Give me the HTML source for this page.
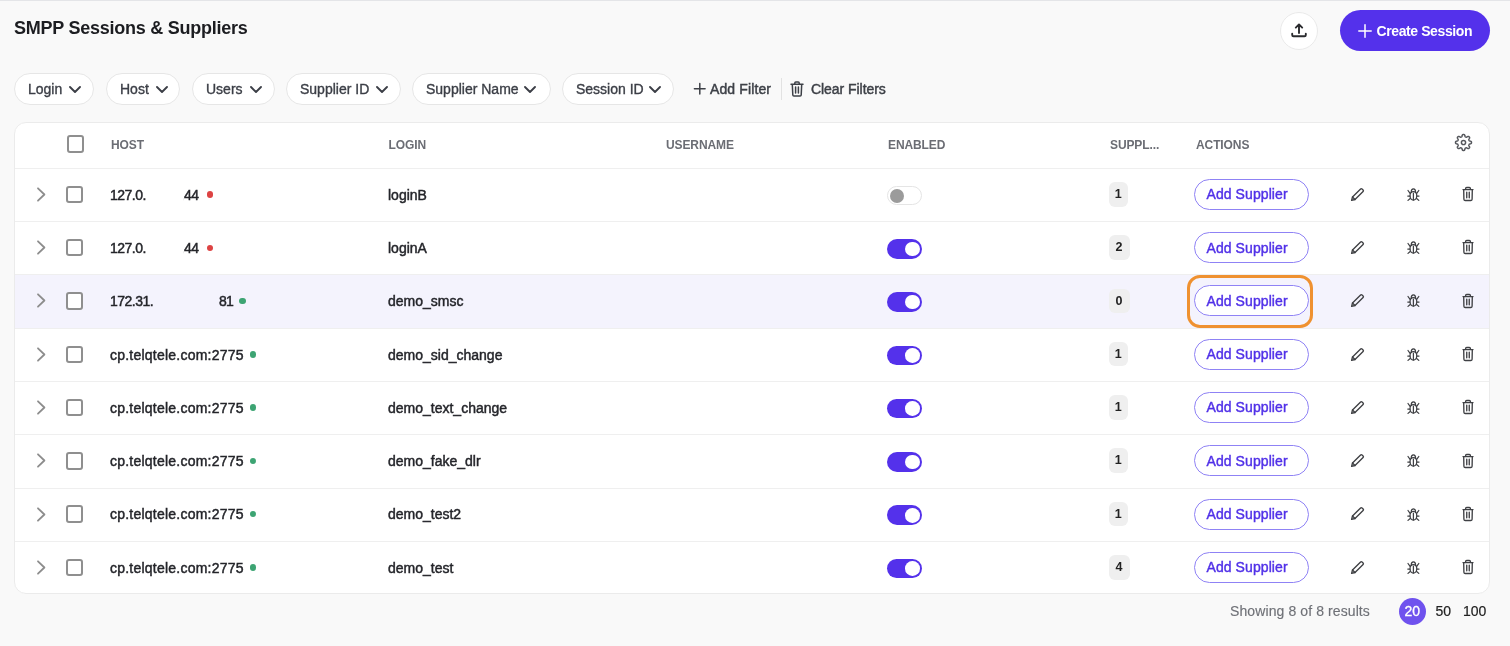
<!DOCTYPE html>
<html><head><meta charset="utf-8">
<style>
*{box-sizing:border-box;margin:0;padding:0}
html,body{width:1510px;height:646px;overflow:hidden;background:#f9f9f9;font-family:"Liberation Sans",sans-serif;color:#222327}
.a{position:absolute}
.topline{left:0;top:0;width:1510px;height:1px;background:#e4e5e8}
.title{left:14px;top:18px;font-size:18px;line-height:20px;font-weight:bold;letter-spacing:-0.25px;color:#1c1d21;white-space:nowrap}
.upl{left:1280px;top:11.5px;width:38px;height:38px;border-radius:50%;background:#fff;border:1px solid #e9e9e9}
.create{left:1340px;top:10px;width:150px;height:41px;border-radius:21px;background:#5431eb;color:#fff}
.create .t{position:absolute;left:36.5px;top:0.5px;line-height:41px;font-size:14px;font-weight:bold;letter-spacing:-0.4px;white-space:nowrap}
.chip{top:73px;height:32px;border-radius:16px;background:#fff;border:1px solid #e6e6e6}
.chip .t{position:absolute;left:13px;top:0;line-height:30px;font-size:14px;color:#3b3e46;white-space:nowrap;-webkit-text-stroke:0.35px #3b3e46}
.chip svg{position:absolute;top:11.8px;margin-left:-0.5px}
.lnk{top:74px;line-height:30px;font-size:14px;color:#3d4047;white-space:nowrap;letter-spacing:0.12px;-webkit-text-stroke:0.45px #3d4047}
.card{left:14px;top:121.5px;width:1476px;height:472.5px;border-radius:12px;background:#fff;border:1px solid #ebebeb;overflow:hidden}
.hd{top:122px;line-height:46px;font-size:12px;font-weight:bold;color:#6b6d74;white-space:nowrap;letter-spacing:-0.1px}
.hline{left:15px;width:1474px;height:1px;background:#efefef}
.cb{width:17.5px;height:17.5px;border:2px solid #8f8f8f;border-radius:3px;background:#fff}
.rt{font-size:14px;line-height:20px;color:#24252a;white-space:nowrap;-webkit-text-stroke:0.45px #24252a}
.dot{width:6.5px;height:6.5px;border-radius:50%}
.red{background:#dd4343}
.grn{background:#3da473}
.tg{width:35px;height:19.5px;border-radius:10px;background:#5431eb}
.tg i{position:absolute;top:2.5px;left:18px;width:14.6px;height:14.6px;border-radius:50%;background:#fff}
.tg.off{background:#fff;border:1px solid #e5e5e5}
.tg.off i{background:#9b9b9b;left:1.8px;top:2.2px;width:14px;height:14px}
.bdg{height:24.5px;border-radius:6px;background:#efefef;font-size:12.5px;font-weight:bold;line-height:24.5px;text-align:center;color:#222}
.add{left:1194px;width:114.5px;height:31px;border-radius:16px;border:1px solid #8f82f5;background:#fff;color:#5030e8;font-size:14px;line-height:29px;white-space:nowrap;-webkit-text-stroke:0.4px #5030e8}
.add span{position:absolute;left:11.5px;top:0.5px;letter-spacing:0.08px}
.ic{position:absolute}
.foot{top:601px;line-height:20px;font-size:14px;white-space:nowrap}
</style></head>
<body>
<div id="wrap" style="position:absolute;left:0;top:0;width:1510px;height:646px;will-change:transform">
<div class="a topline"></div>
<div class="a title">SMPP Sessions &amp; Suppliers</div>

<div class="a upl">
  <svg class="ic" style="left:9px;top:9px" width="20" height="20" viewBox="0 0 20 20" fill="none" stroke="#2a2b2e" stroke-width="1.9" stroke-linecap="round" stroke-linejoin="round">
    <path d="M9 2.4V11M5.8 5.6 9 2.4 12.2 5.6"/>
    <path d="M2.2 11.7V12.9Q2.2 14.2 3.5 14.2H14.5Q15.8 14.2 15.8 12.9V11.7"/>
  </svg>
</div>
<div class="a create">
  <svg class="ic" style="left:17.5px;top:13.5px" width="14" height="14" viewBox="0 0 14 14" stroke="#fff" stroke-width="1.5" stroke-linecap="round"><path d="M7 0.8V13.2M0.8 7H13.2"/></svg>
  <span class="t">Create Session</span>
</div>

<!-- filter chips -->
<div class="a chip" style="left:14px;width:80px"><span class="t">Login</span><svg style="left:54px" width="12" height="7" viewBox="0 0 12 7" fill="none" stroke="#3b3e46" stroke-width="1.85" stroke-linecap="round" stroke-linejoin="round"><path d="M1 1 6 6 11 1"/></svg></div>
<div class="a chip" style="left:106px;width:74px"><span class="t">Host</span><svg style="left:49px" width="12" height="7" viewBox="0 0 12 7" fill="none" stroke="#3b3e46" stroke-width="1.85" stroke-linecap="round" stroke-linejoin="round"><path d="M1 1 6 6 11 1"/></svg></div>
<div class="a chip" style="left:192px;width:83px"><span class="t">Users</span><svg style="left:57px" width="12" height="7" viewBox="0 0 12 7" fill="none" stroke="#3b3e46" stroke-width="1.85" stroke-linecap="round" stroke-linejoin="round"><path d="M1 1 6 6 11 1"/></svg></div>
<div class="a chip" style="left:286px;width:115px"><span class="t">Supplier ID</span><svg style="left:89px" width="12" height="7" viewBox="0 0 12 7" fill="none" stroke="#3b3e46" stroke-width="1.85" stroke-linecap="round" stroke-linejoin="round"><path d="M1 1 6 6 11 1"/></svg></div>
<div class="a chip" style="left:412px;width:139px"><span class="t">Supplier Name</span><svg style="left:111.5px" width="12" height="7" viewBox="0 0 12 7" fill="none" stroke="#3b3e46" stroke-width="1.85" stroke-linecap="round" stroke-linejoin="round"><path d="M1 1 6 6 11 1"/></svg></div>
<div class="a chip" style="left:562px;width:112px"><span class="t">Session ID</span><svg style="left:86px" width="12" height="7" viewBox="0 0 12 7" fill="none" stroke="#3b3e46" stroke-width="1.85" stroke-linecap="round" stroke-linejoin="round"><path d="M1 1 6 6 11 1"/></svg></div>

<svg class="ic" style="left:693px;top:82px" width="13" height="13" viewBox="0 0 13 13" stroke="#3d4047" stroke-width="1.5" stroke-linecap="round"><path d="M6.8 1.4V12.1M1.4 6.8H12.1"/></svg>
<div class="a lnk" style="left:710px">Add Filter</div>
<div class="a" style="left:780.5px;top:78px;width:1px;height:21.5px;background:#e2e2e2"></div>
<svg class="ic" style="left:790px;top:81px" width="14" height="16" viewBox="0 0 14 16" fill="none" stroke="#3d4047" stroke-width="1.5" stroke-linecap="round" stroke-linejoin="round">
  <path d="M1 3.2H13M4.8 3.2V2Q4.8 1 5.8 1H8.2Q9.2 1 9.2 2V3.2M2.3 3.2 2.8 14Q2.9 15 3.9 15H10.1Q11.1 15 11.2 14L11.7 3.2M5.6 6V12M8.4 6V12"/>
</svg>
<div class="a lnk" style="left:811px;letter-spacing:-0.05px">Clear Filters</div>

<!-- table card -->
<div class="a card"></div>
<div class="a cb" style="left:66.5px;top:135px"></div>
<div class="a hd" style="left:111px">HOST</div>
<div class="a hd" style="left:388.5px">LOGIN</div>
<div class="a hd" style="left:666px">USERNAME</div>
<div class="a hd" style="left:888px">ENABLED</div>
<div class="a hd" style="left:1110px">SUPPL...</div>
<div class="a hd" style="left:1196px">ACTIONS</div>
<svg class="ic" style="left:1454px;top:133.3px" width="19" height="19" viewBox="0 0 19 19" fill="none" stroke="#55575c" stroke-width="1.45" stroke-linejoin="round"><path d="M17.50 9.50 17.50 9.66 17.48 9.81 17.46 9.97 17.42 10.12 17.36 10.27 17.27 10.42 17.12 10.55 16.92 10.67 16.64 10.78 16.32 10.86 15.99 10.92 15.71 10.99 15.50 11.07 15.35 11.15 15.24 11.24 15.16 11.34 15.10 11.44 15.05 11.55 15.00 11.65 14.95 11.76 14.91 11.87 14.87 11.97 14.83 12.09 14.81 12.20 14.79 12.33 14.80 12.47 14.85 12.64 14.95 12.84 15.10 13.08 15.28 13.36 15.45 13.65 15.58 13.91 15.64 14.15 15.64 14.34 15.60 14.51 15.54 14.66 15.46 14.80 15.37 14.92 15.26 15.04 15.16 15.16 15.04 15.26 14.92 15.37 14.80 15.46 14.66 15.54 14.51 15.60 14.34 15.64 14.15 15.64 13.91 15.58 13.65 15.45 13.36 15.28 13.08 15.10 12.84 14.95 12.64 14.85 12.47 14.80 12.33 14.79 12.20 14.81 12.09 14.83 11.97 14.87 11.87 14.91 11.76 14.95 11.65 15.00 11.55 15.05 11.44 15.10 11.34 15.16 11.24 15.24 11.15 15.35 11.07 15.50 10.99 15.71 10.92 15.99 10.86 16.32 10.78 16.64 10.67 16.92 10.55 17.12 10.42 17.27 10.27 17.36 10.12 17.42 9.97 17.46 9.81 17.48 9.66 17.50 9.50 17.50 9.34 17.50 9.19 17.48 9.03 17.46 8.88 17.42 8.73 17.36 8.58 17.27 8.45 17.12 8.33 16.92 8.22 16.64 8.14 16.32 8.08 15.99 8.01 15.71 7.93 15.50 7.85 15.35 7.76 15.24 7.66 15.16 7.56 15.10 7.45 15.05 7.35 15.00 7.24 14.95 7.13 14.91 7.03 14.87 6.91 14.83 6.80 14.81 6.67 14.79 6.53 14.80 6.36 14.85 6.16 14.95 5.92 15.10 5.64 15.28 5.35 15.45 5.09 15.58 4.85 15.64 4.66 15.64 4.49 15.60 4.34 15.54 4.20 15.46 4.08 15.37 3.96 15.26 3.84 15.16 3.74 15.04 3.63 14.92 3.54 14.80 3.46 14.66 3.40 14.51 3.36 14.34 3.36 14.15 3.42 13.91 3.55 13.65 3.72 13.36 3.90 13.08 4.05 12.84 4.15 12.64 4.20 12.47 4.21 12.33 4.19 12.20 4.17 12.09 4.13 11.97 4.09 11.87 4.05 11.76 4.00 11.65 3.95 11.55 3.90 11.44 3.84 11.34 3.76 11.24 3.65 11.15 3.50 11.07 3.29 10.99 3.01 10.92 2.68 10.86 2.36 10.78 2.08 10.67 1.88 10.55 1.73 10.42 1.64 10.27 1.58 10.12 1.54 9.97 1.52 9.81 1.50 9.66 1.50 9.50 1.50 9.34 1.52 9.19 1.54 9.03 1.58 8.88 1.64 8.73 1.73 8.58 1.88 8.45 2.08 8.33 2.36 8.22 2.68 8.14 3.01 8.08 3.29 8.01 3.50 7.93 3.65 7.85 3.76 7.76 3.84 7.66 3.90 7.56 3.95 7.45 4.00 7.35 4.05 7.24 4.09 7.13 4.13 7.03 4.17 6.91 4.19 6.80 4.21 6.67 4.20 6.53 4.15 6.36 4.05 6.16 3.90 5.92 3.72 5.64 3.55 5.35 3.42 5.09 3.36 4.85 3.36 4.66 3.40 4.49 3.46 4.34 3.54 4.20 3.63 4.08 3.74 3.96 3.84 3.84 3.96 3.74 4.08 3.63 4.20 3.54 4.34 3.46 4.49 3.40 4.66 3.36 4.85 3.36 5.09 3.42 5.35 3.55 5.64 3.72 5.92 3.90 6.16 4.05 6.36 4.15 6.53 4.20 6.67 4.21 6.80 4.19 6.91 4.17 7.03 4.13 7.13 4.09 7.24 4.05 7.35 4.00 7.45 3.95 7.56 3.90 7.66 3.84 7.76 3.76 7.85 3.65 7.93 3.50 8.01 3.29 8.08 3.01 8.14 2.68 8.22 2.36 8.33 2.08 8.45 1.88 8.58 1.73 8.73 1.64 8.88 1.58 9.03 1.54 9.19 1.52 9.34 1.50 9.50 1.50 9.66 1.50 9.81 1.52 9.97 1.54 10.12 1.58 10.27 1.64 10.42 1.73 10.55 1.88 10.67 2.08 10.78 2.36 10.86 2.68 10.92 3.01 10.99 3.29 11.07 3.50 11.15 3.65 11.24 3.76 11.34 3.84 11.44 3.90 11.55 3.95 11.65 4.00 11.76 4.05 11.87 4.09 11.97 4.13 12.09 4.17 12.20 4.19 12.33 4.21 12.47 4.20 12.64 4.15 12.84 4.05 13.08 3.90 13.36 3.72 13.65 3.55 13.91 3.42 14.15 3.36 14.34 3.36 14.51 3.40 14.66 3.46 14.80 3.54 14.92 3.63 15.04 3.74 15.16 3.84 15.26 3.96 15.37 4.08 15.46 4.20 15.54 4.34 15.60 4.49 15.64 4.66 15.64 4.85 15.58 5.09 15.45 5.35 15.28 5.64 15.10 5.92 14.95 6.16 14.85 6.36 14.80 6.53 14.79 6.67 14.81 6.80 14.83 6.91 14.87 7.03 14.91 7.13 14.95 7.24 15.00 7.35 15.05 7.45 15.10 7.56 15.16 7.66 15.24 7.76 15.35 7.85 15.50 7.93 15.71 8.01 15.99 8.08 16.32 8.14 16.64 8.22 16.92 8.33 17.12 8.45 17.27 8.58 17.36 8.73 17.42 8.88 17.46 9.03 17.48 9.19 17.50 9.34Z"/><circle cx="9.5" cy="9.5" r="2.1"/></svg>

<div class="a hline" style="top:168px"></div>
<!--ROWS-->
<div class="a hline" style="top:221.09px"></div>
<svg class="ic" style="left:36px;top:186.9px" width="10" height="15" viewBox="0 0 10 15" fill="none" stroke="#8d8d8d" stroke-width="1.8" stroke-linecap="round" stroke-linejoin="round"><path d="M2 1.3 8.4 7.5 2 13.7"/></svg>
<div class="a cb" style="left:65.5px;top:185.65px"></div>
<div class="a rt" style="left:110px;top:184.75px;letter-spacing:-0.5px">127.0.</div>
<div class="a rt" style="left:180.3px;top:184.75px;letter-spacing:-0.3px">.44</div>
<div class="a" style="left:150px;top:184.75px;width:32.6px;height:20px;background:#fff"></div>
<div class="a dot red" style="left:206.8px;top:191.25px"></div>
<div class="a rt" style="left:388px;top:184.75px">loginB</div>
<div class="a tg off" style="left:887px;top:185.75px"><i></i></div>
<div class="a bdg" style="left:1108.6px;top:182px;width:19.5px">1</div>
<div class="a add" style="top:178.8px"><span>Add Supplier</span></div>
<svg class="ic" style="left:1350px;top:186.7px" width="15" height="15" viewBox="0 0 15 15" fill="none" stroke="#3f4044" stroke-width="1.35" stroke-linejoin="round" stroke-linecap="round"><path d="M10.6 1.9Q11.3 1.2 12 1.9L13.1 3Q13.8 3.7 13.1 4.4L5 12.5 1.6 13.4 2.5 10Z"/><path d="M2.5 10 5 12.5"/></svg>
<svg class="ic" style="left:1406px;top:186.9px" width="15" height="15" viewBox="0 0 15 15" fill="none" stroke="#3f4044" stroke-width="1.25" stroke-linecap="round" stroke-linejoin="round"><ellipse cx="7.4" cy="8.8" rx="3.4" ry="4.3"/><path d="M5.2 5.4Q5.2 1.9 7.4 1.9Q9.6 1.9 9.6 5.4M7.4 6.2V12.9M4.1 6.4 2 3.5M10.7 6.4 12.8 3.5M4 9H1.8M10.8 9H13M4.2 11.5 2 13.4M10.6 11.5 12.8 13.4"/></svg>
<svg class="ic" style="left:1461px;top:186.2px" width="14" height="16" viewBox="0 0 14 16" fill="none" stroke="#3f4044" stroke-width="1.35" stroke-linecap="round" stroke-linejoin="round"><path d="M2 3.6H12M4.6 3.6V2.6Q4.6 1.5 5.7 1.5H8.3Q9.4 1.5 9.4 2.6V3.6M2.7 3.6 2.9 13.2Q3 14.5 4.2 14.5H9.8Q11 14.5 11.1 13.2L11.3 3.6M5.75 6.2V11.7M8.25 6.2V11.7"/></svg>
<div class="a hline" style="top:274.38px"></div>
<svg class="ic" style="left:36px;top:240.19px" width="10" height="15" viewBox="0 0 10 15" fill="none" stroke="#8d8d8d" stroke-width="1.8" stroke-linecap="round" stroke-linejoin="round"><path d="M2 1.3 8.4 7.5 2 13.7"/></svg>
<div class="a cb" style="left:65.5px;top:238.94px"></div>
<div class="a rt" style="left:110px;top:238.04px;letter-spacing:-0.5px">127.0.</div>
<div class="a rt" style="left:180.3px;top:238.04px;letter-spacing:-0.3px">.44</div>
<div class="a" style="left:150px;top:238.04px;width:32.6px;height:20px;background:#fff"></div>
<div class="a dot red" style="left:206.8px;top:244.54px"></div>
<div class="a rt" style="left:388px;top:238.04px">loginA</div>
<div class="a tg" style="left:887px;top:239.04px"><i></i></div>
<div class="a bdg" style="left:1108.6px;top:235.29px;width:21px">2</div>
<div class="a add" style="top:232.09px"><span>Add Supplier</span></div>
<svg class="ic" style="left:1350px;top:239.99px" width="15" height="15" viewBox="0 0 15 15" fill="none" stroke="#3f4044" stroke-width="1.35" stroke-linejoin="round" stroke-linecap="round"><path d="M10.6 1.9Q11.3 1.2 12 1.9L13.1 3Q13.8 3.7 13.1 4.4L5 12.5 1.6 13.4 2.5 10Z"/><path d="M2.5 10 5 12.5"/></svg>
<svg class="ic" style="left:1406px;top:240.19px" width="15" height="15" viewBox="0 0 15 15" fill="none" stroke="#3f4044" stroke-width="1.25" stroke-linecap="round" stroke-linejoin="round"><ellipse cx="7.4" cy="8.8" rx="3.4" ry="4.3"/><path d="M5.2 5.4Q5.2 1.9 7.4 1.9Q9.6 1.9 9.6 5.4M7.4 6.2V12.9M4.1 6.4 2 3.5M10.7 6.4 12.8 3.5M4 9H1.8M10.8 9H13M4.2 11.5 2 13.4M10.6 11.5 12.8 13.4"/></svg>
<svg class="ic" style="left:1461px;top:239.49px" width="14" height="16" viewBox="0 0 14 16" fill="none" stroke="#3f4044" stroke-width="1.35" stroke-linecap="round" stroke-linejoin="round"><path d="M2 3.6H12M4.6 3.6V2.6Q4.6 1.5 5.7 1.5H8.3Q9.4 1.5 9.4 2.6V3.6M2.7 3.6 2.9 13.2Q3 14.5 4.2 14.5H9.8Q11 14.5 11.1 13.2L11.3 3.6M5.75 6.2V11.7M8.25 6.2V11.7"/></svg>
<div class="a" style="left:15px;top:275.38px;width:1474px;height:52.29px;background:#f4f3fd"></div>
<div class="a hline" style="top:327.67px"></div>
<svg class="ic" style="left:36px;top:293.48px" width="10" height="15" viewBox="0 0 10 15" fill="none" stroke="#8d8d8d" stroke-width="1.8" stroke-linecap="round" stroke-linejoin="round"><path d="M2 1.3 8.4 7.5 2 13.7"/></svg>
<div class="a cb" style="left:65.5px;top:292.23px"></div>
<div class="a rt" style="left:110px;top:291.33px;letter-spacing:-0.5px">172.31.</div>
<div class="a rt" style="left:219px;top:291.33px;letter-spacing:-0.9px">81</div>
<div class="a dot grn" style="left:239.3px;top:297.83px"></div>
<div class="a rt" style="left:388px;top:291.33px">demo_smsc</div>
<div class="a tg" style="left:887px;top:292.33px"><i></i></div>
<div class="a bdg" style="left:1108.6px;top:288.58px;width:21px">0</div>
<div class="a" style="left:1187px;top:274.78px;width:125.6px;height:53.6px;border:3px solid #ef9130;border-radius:13px"></div>
<div class="a add" style="top:285.38px"><span>Add Supplier</span></div>
<svg class="ic" style="left:1350px;top:293.28px" width="15" height="15" viewBox="0 0 15 15" fill="none" stroke="#3f4044" stroke-width="1.35" stroke-linejoin="round" stroke-linecap="round"><path d="M10.6 1.9Q11.3 1.2 12 1.9L13.1 3Q13.8 3.7 13.1 4.4L5 12.5 1.6 13.4 2.5 10Z"/><path d="M2.5 10 5 12.5"/></svg>
<svg class="ic" style="left:1406px;top:293.48px" width="15" height="15" viewBox="0 0 15 15" fill="none" stroke="#3f4044" stroke-width="1.25" stroke-linecap="round" stroke-linejoin="round"><ellipse cx="7.4" cy="8.8" rx="3.4" ry="4.3"/><path d="M5.2 5.4Q5.2 1.9 7.4 1.9Q9.6 1.9 9.6 5.4M7.4 6.2V12.9M4.1 6.4 2 3.5M10.7 6.4 12.8 3.5M4 9H1.8M10.8 9H13M4.2 11.5 2 13.4M10.6 11.5 12.8 13.4"/></svg>
<svg class="ic" style="left:1461px;top:292.78px" width="14" height="16" viewBox="0 0 14 16" fill="none" stroke="#3f4044" stroke-width="1.35" stroke-linecap="round" stroke-linejoin="round"><path d="M2 3.6H12M4.6 3.6V2.6Q4.6 1.5 5.7 1.5H8.3Q9.4 1.5 9.4 2.6V3.6M2.7 3.6 2.9 13.2Q3 14.5 4.2 14.5H9.8Q11 14.5 11.1 13.2L11.3 3.6M5.75 6.2V11.7M8.25 6.2V11.7"/></svg>
<div class="a hline" style="top:380.96px"></div>
<svg class="ic" style="left:36px;top:346.77px" width="10" height="15" viewBox="0 0 10 15" fill="none" stroke="#8d8d8d" stroke-width="1.8" stroke-linecap="round" stroke-linejoin="round"><path d="M2 1.3 8.4 7.5 2 13.7"/></svg>
<div class="a cb" style="left:65.5px;top:345.52px"></div>
<div class="a rt" style="left:110px;top:344.62px;letter-spacing:0.23px">cp.telqtele.com:2775</div>
<div class="a dot grn" style="left:249.6px;top:351.12px"></div>
<div class="a rt" style="left:388px;top:344.62px">demo_sid_change</div>
<div class="a tg" style="left:887px;top:345.62px"><i></i></div>
<div class="a bdg" style="left:1108.6px;top:341.87px;width:19.5px">1</div>
<div class="a add" style="top:338.67px"><span>Add Supplier</span></div>
<svg class="ic" style="left:1350px;top:346.57px" width="15" height="15" viewBox="0 0 15 15" fill="none" stroke="#3f4044" stroke-width="1.35" stroke-linejoin="round" stroke-linecap="round"><path d="M10.6 1.9Q11.3 1.2 12 1.9L13.1 3Q13.8 3.7 13.1 4.4L5 12.5 1.6 13.4 2.5 10Z"/><path d="M2.5 10 5 12.5"/></svg>
<svg class="ic" style="left:1406px;top:346.77px" width="15" height="15" viewBox="0 0 15 15" fill="none" stroke="#3f4044" stroke-width="1.25" stroke-linecap="round" stroke-linejoin="round"><ellipse cx="7.4" cy="8.8" rx="3.4" ry="4.3"/><path d="M5.2 5.4Q5.2 1.9 7.4 1.9Q9.6 1.9 9.6 5.4M7.4 6.2V12.9M4.1 6.4 2 3.5M10.7 6.4 12.8 3.5M4 9H1.8M10.8 9H13M4.2 11.5 2 13.4M10.6 11.5 12.8 13.4"/></svg>
<svg class="ic" style="left:1461px;top:346.07px" width="14" height="16" viewBox="0 0 14 16" fill="none" stroke="#3f4044" stroke-width="1.35" stroke-linecap="round" stroke-linejoin="round"><path d="M2 3.6H12M4.6 3.6V2.6Q4.6 1.5 5.7 1.5H8.3Q9.4 1.5 9.4 2.6V3.6M2.7 3.6 2.9 13.2Q3 14.5 4.2 14.5H9.8Q11 14.5 11.1 13.2L11.3 3.6M5.75 6.2V11.7M8.25 6.2V11.7"/></svg>
<div class="a hline" style="top:434.25px"></div>
<svg class="ic" style="left:36px;top:400.06px" width="10" height="15" viewBox="0 0 10 15" fill="none" stroke="#8d8d8d" stroke-width="1.8" stroke-linecap="round" stroke-linejoin="round"><path d="M2 1.3 8.4 7.5 2 13.7"/></svg>
<div class="a cb" style="left:65.5px;top:398.81px"></div>
<div class="a rt" style="left:110px;top:397.91px;letter-spacing:0.23px">cp.telqtele.com:2775</div>
<div class="a dot grn" style="left:249.6px;top:404.41px"></div>
<div class="a rt" style="left:388px;top:397.91px">demo_text_change</div>
<div class="a tg" style="left:887px;top:398.91px"><i></i></div>
<div class="a bdg" style="left:1108.6px;top:395.16px;width:19.5px">1</div>
<div class="a add" style="top:391.96px"><span>Add Supplier</span></div>
<svg class="ic" style="left:1350px;top:399.86px" width="15" height="15" viewBox="0 0 15 15" fill="none" stroke="#3f4044" stroke-width="1.35" stroke-linejoin="round" stroke-linecap="round"><path d="M10.6 1.9Q11.3 1.2 12 1.9L13.1 3Q13.8 3.7 13.1 4.4L5 12.5 1.6 13.4 2.5 10Z"/><path d="M2.5 10 5 12.5"/></svg>
<svg class="ic" style="left:1406px;top:400.06px" width="15" height="15" viewBox="0 0 15 15" fill="none" stroke="#3f4044" stroke-width="1.25" stroke-linecap="round" stroke-linejoin="round"><ellipse cx="7.4" cy="8.8" rx="3.4" ry="4.3"/><path d="M5.2 5.4Q5.2 1.9 7.4 1.9Q9.6 1.9 9.6 5.4M7.4 6.2V12.9M4.1 6.4 2 3.5M10.7 6.4 12.8 3.5M4 9H1.8M10.8 9H13M4.2 11.5 2 13.4M10.6 11.5 12.8 13.4"/></svg>
<svg class="ic" style="left:1461px;top:399.36px" width="14" height="16" viewBox="0 0 14 16" fill="none" stroke="#3f4044" stroke-width="1.35" stroke-linecap="round" stroke-linejoin="round"><path d="M2 3.6H12M4.6 3.6V2.6Q4.6 1.5 5.7 1.5H8.3Q9.4 1.5 9.4 2.6V3.6M2.7 3.6 2.9 13.2Q3 14.5 4.2 14.5H9.8Q11 14.5 11.1 13.2L11.3 3.6M5.75 6.2V11.7M8.25 6.2V11.7"/></svg>
<div class="a hline" style="top:487.54px"></div>
<svg class="ic" style="left:36px;top:453.35px" width="10" height="15" viewBox="0 0 10 15" fill="none" stroke="#8d8d8d" stroke-width="1.8" stroke-linecap="round" stroke-linejoin="round"><path d="M2 1.3 8.4 7.5 2 13.7"/></svg>
<div class="a cb" style="left:65.5px;top:452.1px"></div>
<div class="a rt" style="left:110px;top:451.2px;letter-spacing:0.23px">cp.telqtele.com:2775</div>
<div class="a dot grn" style="left:249.6px;top:457.7px"></div>
<div class="a rt" style="left:388px;top:451.2px">demo_fake_dlr</div>
<div class="a tg" style="left:887px;top:452.2px"><i></i></div>
<div class="a bdg" style="left:1108.6px;top:448.45px;width:19.5px">1</div>
<div class="a add" style="top:445.25px"><span>Add Supplier</span></div>
<svg class="ic" style="left:1350px;top:453.15px" width="15" height="15" viewBox="0 0 15 15" fill="none" stroke="#3f4044" stroke-width="1.35" stroke-linejoin="round" stroke-linecap="round"><path d="M10.6 1.9Q11.3 1.2 12 1.9L13.1 3Q13.8 3.7 13.1 4.4L5 12.5 1.6 13.4 2.5 10Z"/><path d="M2.5 10 5 12.5"/></svg>
<svg class="ic" style="left:1406px;top:453.35px" width="15" height="15" viewBox="0 0 15 15" fill="none" stroke="#3f4044" stroke-width="1.25" stroke-linecap="round" stroke-linejoin="round"><ellipse cx="7.4" cy="8.8" rx="3.4" ry="4.3"/><path d="M5.2 5.4Q5.2 1.9 7.4 1.9Q9.6 1.9 9.6 5.4M7.4 6.2V12.9M4.1 6.4 2 3.5M10.7 6.4 12.8 3.5M4 9H1.8M10.8 9H13M4.2 11.5 2 13.4M10.6 11.5 12.8 13.4"/></svg>
<svg class="ic" style="left:1461px;top:452.65px" width="14" height="16" viewBox="0 0 14 16" fill="none" stroke="#3f4044" stroke-width="1.35" stroke-linecap="round" stroke-linejoin="round"><path d="M2 3.6H12M4.6 3.6V2.6Q4.6 1.5 5.7 1.5H8.3Q9.4 1.5 9.4 2.6V3.6M2.7 3.6 2.9 13.2Q3 14.5 4.2 14.5H9.8Q11 14.5 11.1 13.2L11.3 3.6M5.75 6.2V11.7M8.25 6.2V11.7"/></svg>
<div class="a hline" style="top:540.83px"></div>
<svg class="ic" style="left:36px;top:506.64px" width="10" height="15" viewBox="0 0 10 15" fill="none" stroke="#8d8d8d" stroke-width="1.8" stroke-linecap="round" stroke-linejoin="round"><path d="M2 1.3 8.4 7.5 2 13.7"/></svg>
<div class="a cb" style="left:65.5px;top:505.39px"></div>
<div class="a rt" style="left:110px;top:504.49px;letter-spacing:0.23px">cp.telqtele.com:2775</div>
<div class="a dot grn" style="left:249.6px;top:510.99px"></div>
<div class="a rt" style="left:388px;top:504.49px">demo_test2</div>
<div class="a tg" style="left:887px;top:505.49px"><i></i></div>
<div class="a bdg" style="left:1108.6px;top:501.74px;width:19.5px">1</div>
<div class="a add" style="top:498.54px"><span>Add Supplier</span></div>
<svg class="ic" style="left:1350px;top:506.44px" width="15" height="15" viewBox="0 0 15 15" fill="none" stroke="#3f4044" stroke-width="1.35" stroke-linejoin="round" stroke-linecap="round"><path d="M10.6 1.9Q11.3 1.2 12 1.9L13.1 3Q13.8 3.7 13.1 4.4L5 12.5 1.6 13.4 2.5 10Z"/><path d="M2.5 10 5 12.5"/></svg>
<svg class="ic" style="left:1406px;top:506.64px" width="15" height="15" viewBox="0 0 15 15" fill="none" stroke="#3f4044" stroke-width="1.25" stroke-linecap="round" stroke-linejoin="round"><ellipse cx="7.4" cy="8.8" rx="3.4" ry="4.3"/><path d="M5.2 5.4Q5.2 1.9 7.4 1.9Q9.6 1.9 9.6 5.4M7.4 6.2V12.9M4.1 6.4 2 3.5M10.7 6.4 12.8 3.5M4 9H1.8M10.8 9H13M4.2 11.5 2 13.4M10.6 11.5 12.8 13.4"/></svg>
<svg class="ic" style="left:1461px;top:505.94px" width="14" height="16" viewBox="0 0 14 16" fill="none" stroke="#3f4044" stroke-width="1.35" stroke-linecap="round" stroke-linejoin="round"><path d="M2 3.6H12M4.6 3.6V2.6Q4.6 1.5 5.7 1.5H8.3Q9.4 1.5 9.4 2.6V3.6M2.7 3.6 2.9 13.2Q3 14.5 4.2 14.5H9.8Q11 14.5 11.1 13.2L11.3 3.6M5.75 6.2V11.7M8.25 6.2V11.7"/></svg>
<svg class="ic" style="left:36px;top:559.93px" width="10" height="15" viewBox="0 0 10 15" fill="none" stroke="#8d8d8d" stroke-width="1.8" stroke-linecap="round" stroke-linejoin="round"><path d="M2 1.3 8.4 7.5 2 13.7"/></svg>
<div class="a cb" style="left:65.5px;top:558.68px"></div>
<div class="a rt" style="left:110px;top:557.78px;letter-spacing:0.23px">cp.telqtele.com:2775</div>
<div class="a dot grn" style="left:249.6px;top:564.28px"></div>
<div class="a rt" style="left:388px;top:557.78px">demo_test</div>
<div class="a tg" style="left:887px;top:558.78px"><i></i></div>
<div class="a bdg" style="left:1108.6px;top:555.03px;width:21px">4</div>
<div class="a add" style="top:551.83px"><span>Add Supplier</span></div>
<svg class="ic" style="left:1350px;top:559.73px" width="15" height="15" viewBox="0 0 15 15" fill="none" stroke="#3f4044" stroke-width="1.35" stroke-linejoin="round" stroke-linecap="round"><path d="M10.6 1.9Q11.3 1.2 12 1.9L13.1 3Q13.8 3.7 13.1 4.4L5 12.5 1.6 13.4 2.5 10Z"/><path d="M2.5 10 5 12.5"/></svg>
<svg class="ic" style="left:1406px;top:559.93px" width="15" height="15" viewBox="0 0 15 15" fill="none" stroke="#3f4044" stroke-width="1.25" stroke-linecap="round" stroke-linejoin="round"><ellipse cx="7.4" cy="8.8" rx="3.4" ry="4.3"/><path d="M5.2 5.4Q5.2 1.9 7.4 1.9Q9.6 1.9 9.6 5.4M7.4 6.2V12.9M4.1 6.4 2 3.5M10.7 6.4 12.8 3.5M4 9H1.8M10.8 9H13M4.2 11.5 2 13.4M10.6 11.5 12.8 13.4"/></svg>
<svg class="ic" style="left:1461px;top:559.23px" width="14" height="16" viewBox="0 0 14 16" fill="none" stroke="#3f4044" stroke-width="1.35" stroke-linecap="round" stroke-linejoin="round"><path d="M2 3.6H12M4.6 3.6V2.6Q4.6 1.5 5.7 1.5H8.3Q9.4 1.5 9.4 2.6V3.6M2.7 3.6 2.9 13.2Q3 14.5 4.2 14.5H9.8Q11 14.5 11.1 13.2L11.3 3.6M5.75 6.2V11.7M8.25 6.2V11.7"/></svg>
<!--/ROWS-->

<div class="a foot" style="left:1230px;color:#6f7177;letter-spacing:0.1px;-webkit-text-stroke:0.15px #6f7177">Showing 8 of 8 results</div>
<div class="a" style="left:1399px;top:597.5px;width:27px;height:27px;border-radius:50%;background:#6f52ee"></div>
<div class="a foot" style="left:1404.5px;color:#fff;-webkit-text-stroke:0.35px #fff">20</div>
<div class="a foot" style="left:1435.5px;color:#222;-webkit-text-stroke:0.2px #222">50</div>
<div class="a foot" style="left:1463px;color:#222;-webkit-text-stroke:0.2px #222">100</div>
</div>
</body></html>
